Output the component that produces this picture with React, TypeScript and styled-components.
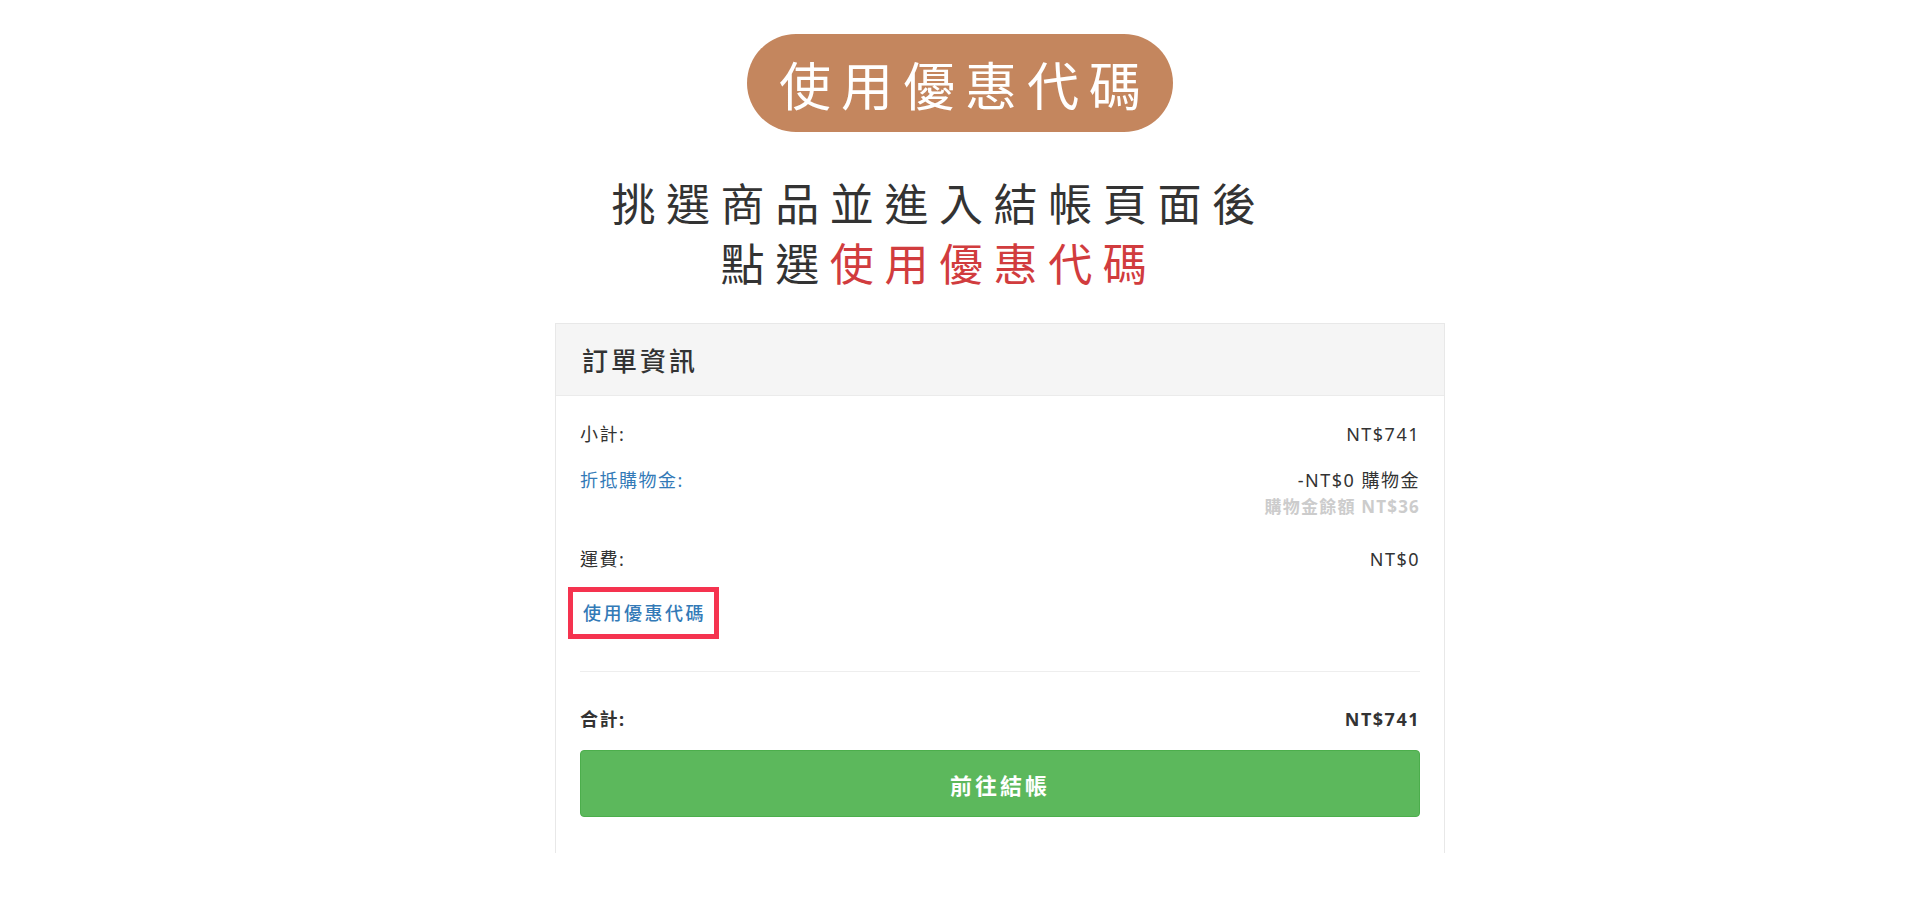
import React from 'react'
import styled, { createGlobalStyle } from 'styled-components'

const GlobalStyle = createGlobalStyle`
  html, body {
    margin: 0;
    padding: 0;
    background: #ffffff;
  }
  body {
    font-family: "Noto Sans", "Noto Sans CJK TC", sans-serif;
    color: #333333;
  }
`

const Page = styled.div`
  width: 1920px;
  height: 923px;
  padding-top: 34px;
  box-sizing: border-box;
  display: flex;
  flex-direction: column;
  align-items: center;
  overflow: hidden;
`

const Pill = styled.div`
  width: 426px;
  height: 98px;
  border-radius: 49px;
  background: #c4865e;
  color: #ffffff;
  display: flex;
  align-items: center;
  justify-content: center;
  font-family: "Noto Sans CJK TC", sans-serif;
  font-size: 52px;
  letter-spacing: 10px;
  padding-left: 10px;
  box-sizing: border-box;
`

const Heading = styled.h2`
  margin: 40px 42px 0 0;
  font-family: "Noto Sans CJK TC", sans-serif;
  font-weight: 400;
  font-size: 44px;
  line-height: 60px;
  letter-spacing: 10.6px;
  text-align: center;
  color: #333333;
`

const Highlight = styled.span`
  color: #d13c3e;
`

const Card = styled.section`
  width: 890px;
  margin: 31px 0 0 80px;
  border: 1px solid #e8e8e8;
  border-bottom: none;
  box-sizing: border-box;
`

const CardHeader = styled.div`
  height: 71px;
  background: #f5f5f5;
  border-bottom: 1px solid #ebebeb;
  display: flex;
  align-items: center;
  padding-left: 26px;
  font-family: "Noto Sans CJK TC", sans-serif;
  font-size: 26px;
  font-weight: 500;
  letter-spacing: 3px;
  color: #333333;
`

const CardBody = styled.div`
  padding: 26px 24px 36px 24px;
  display: flex;
  flex-direction: column;
`

const Row = styled.div<{ $gap?: number; $bold?: boolean }>`
  display: flex;
  justify-content: space-between;
  align-items: flex-start;
  margin-top: ${({ $gap }) => $gap ?? 0}px;
  font-size: 18px;
  line-height: 24px;
  letter-spacing: 1.5px;
  font-weight: ${({ $bold }) => ($bold ? 700 : 400)};
  color: #333333;
`

const Label = styled.span<{ $link?: boolean }>`
  color: ${({ $link }) => ($link ? '#337ab7' : 'inherit')};
`

const Amount = styled.div`
  display: flex;
  flex-direction: column;
  align-items: flex-end;
`

const SubNote = styled.span`
  font-size: 17px;
  line-height: 20px;
  margin-top: 5px;
  font-weight: 700;
  color: #cccccc;
  letter-spacing: 1.2px;
`

const CouponBox = styled.div`
  align-self: flex-start;
  margin: 16px 0 0 -12px;
  border: 5px solid #f5334f;
  padding: 9px 8px 9px 10px;
  font-size: 18px;
  line-height: 24px;
  letter-spacing: 2.5px;
  font-weight: 500;
  color: #337ab7;
`

const Divider = styled.hr`
  margin: 32px 0 0 0;
  border: none;
  border-top: 1px solid #eeeeee;
  height: 0;
`

const CheckoutButton = styled.button`
  margin-top: 19px;
  height: 67px;
  width: 100%;
  background: #5cb85c;
  border: 1px solid #4cae4c;
  border-radius: 4px;
  color: #ffffff;
  font-family: "Noto Sans CJK TC", sans-serif;
  font-size: 22px;
  font-weight: 700;
  letter-spacing: 3px;
  padding-left: 6px;
  cursor: pointer;
`

const App: React.FC = () => {
  return (
    <>
      <GlobalStyle />
      <Page>
        <Pill>使用優惠代碼</Pill>
        <Heading>
          挑選商品並進入結帳頁面後
          <br />
          點選<Highlight>使用優惠代碼</Highlight>
        </Heading>
        <Card>
          <CardHeader>訂單資訊</CardHeader>
          <CardBody>
            <Row>
              <Label>小計:</Label>
              <span>NT$741</span>
            </Row>
            <Row $gap={22}>
              <Label $link>折抵購物金:</Label>
              <Amount>
                <span>-NT$0 購物金</span>
                <SubNote>購物金餘額 NT$36</SubNote>
              </Amount>
            </Row>
            <Row $gap={30}>
              <Label>運費:</Label>
              <span>NT$0</span>
            </Row>
            <CouponBox>使用優惠代碼</CouponBox>
            <Divider />
            <Row $gap={35} $bold>
              <Label>合計:</Label>
              <span>NT$741</span>
            </Row>
            <CheckoutButton>前往結帳</CheckoutButton>
          </CardBody>
        </Card>
      </Page>
    </>
  )
}

export default App
